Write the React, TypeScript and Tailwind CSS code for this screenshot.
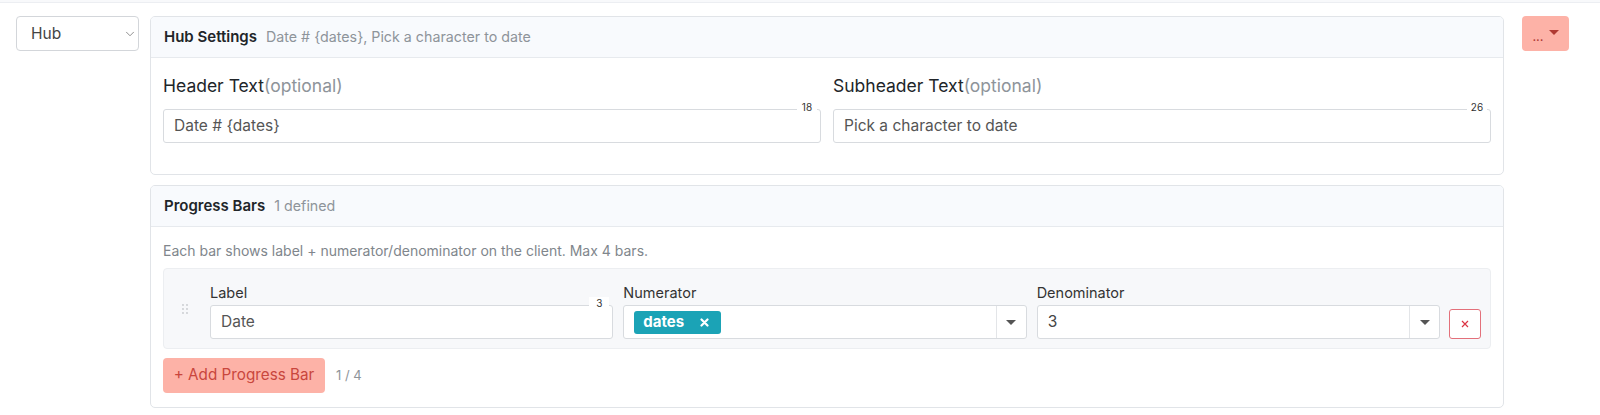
import { ChevronDown } from 'lucide-react';

const font = { fontFamily: 'Inter, "Noto Sans", sans-serif' };

function Caret({ className = '' }: { className?: string }) {
  return (
    <svg className={className} width="10" height="5" viewBox="0 0 10 5">
      <path d="M0 0h10L5 5z" fill="currentColor" />
    </svg>
  );
}

function Counter({ value }: { value: number }) {
  return (
    <span className="absolute right-[4px] -top-[8px] w-[20px] bg-white text-center text-[10px] leading-[12px] text-[#333]">
      {value}
    </span>
  );
}

function CountedInput({ value, count }: { value: string; count: number }) {
  return (
    <div className="relative">
      <div className="h-[34px] rounded-[3px] border border-[#d8dbdf] bg-white px-[10px] flex items-center text-[15.5px] text-[#555]">
        {value}
      </div>
      <Counter value={count} />
    </div>
  );
}

function SelectBox({ children }: { children: React.ReactNode }) {
  return (
    <div className="h-[34px] rounded-[3px] border border-[#d8dbdf] bg-white flex">
      <div className="flex-1 flex items-center px-[10px]">{children}</div>
      <div className="w-[30px] border-l border-[#e3e5e8] flex items-center justify-center text-[#555]">
        <Caret />
      </div>
    </div>
  );
}

function DragHandle() {
  return (
    <svg width="6" height="10" viewBox="0 0 6 10" className="text-[#c6c9cd]">
      {[0, 4, 8].map(y => (
        <g key={y}>
          <circle cx="1" cy={y + 1} r="0.9" fill="currentColor" />
          <circle cx="5" cy={y + 1} r="0.9" fill="currentColor" />
        </g>
      ))}
    </svg>
  );
}

function CardHeader({ title, note }: { title: string; note: string }) {
  return (
    <div className="h-[41px] bg-[#f8fafd] border-b border-[#e7eaee] flex items-center px-[13px] gap-[9px] rounded-t-[4px]">
      <span className="text-[15px] font-semibold text-[#212529]">{title}</span>
      <span className="text-[14.25px] text-[#8e949a]">{note}</span>
    </div>
  );
}

export default function App() {
  return (
    <div className="min-h-[415px] bg-white" style={font}>
      <div className="h-[3px] border-b border-[#eceef2] bg-[#f8f9fb]" />
      <div className="flex items-start pl-[16px] pt-[13px]">
        <div className="w-[123px] h-[35px] rounded-[4px] border border-[#d3d6da] bg-white flex items-center justify-between pl-[14px] pr-[1px] text-[15.5px] text-[#444]">
          <span>Hub</span>
          <ChevronDown size={14} strokeWidth={1.25} className="text-[#666]" />
        </div>

        <div className="ml-[11px] w-[1354px] flex flex-col gap-[10px]">
          {/* Hub Settings */}
          <div className="rounded-[5px] border border-[#e1e4e8] bg-white">
            <CardHeader title="Hub Settings" note="Date # {dates}, Pick a character to date" />
            <div className="px-[12px] pt-[17px] pb-[31px] grid grid-cols-2 gap-[12px]">
              <div>
                <div className="text-[17.5px] leading-[22px] text-[#212529] mb-[12px]">
                  Header Text<span className="text-[#8e949a]">(optional)</span>
                </div>
                <CountedInput value="Date # {dates}" count={18} />
              </div>
              <div>
                <div className="text-[17.5px] leading-[22px] text-[#212529] mb-[12px]">
                  Subheader Text<span className="text-[#8e949a]">(optional)</span>
                </div>
                <CountedInput value="Pick a character to date" count={26} />
              </div>
            </div>
          </div>

          {/* Progress Bars */}
          <div className="rounded-[5px] border border-[#e1e4e8] bg-white">
            <CardHeader title="Progress Bars" note="1 defined" />
            <div className="px-[12px] pt-[15px] pb-[14px]">
              <div className="text-[14px] leading-[18px] text-[#80868c]">
                Each bar shows label + numerator/denominator on the client. Max 4 bars.
              </div>
              <div className="mt-[8px] rounded-[4px] border border-[#eceef1] bg-[#f7f8fa] pl-[18px] pr-[9px] pt-[14px] pb-[9px] flex items-end">
                <div className="w-[28px] self-start pt-[21px]">
                  <DragHandle />
                </div>
                <div className="flex-1 grid grid-cols-3 gap-[10px]">
                  <div>
                    <div className="text-[14.5px] leading-[20px] text-[#333] mb-[2px]">Label</div>
                    <CountedInput value="Date" count={3} />
                  </div>
                  <div>
                    <div className="text-[14.5px] leading-[20px] text-[#333] mb-[2px]">Numerator</div>
                    <SelectBox>
                      <span className="h-[23px] rounded-[3px] bg-[#1ba3b6] text-white text-[15px] font-bold flex items-center pl-[9px] pr-[12px] gap-[16px]">
                        dates
                        <svg width="9" height="9" viewBox="0 0 9 9">
                          <path d="M1.5 1.5l6 6M7.5 1.5l-6 6" stroke="white" strokeWidth="2.2" strokeLinecap="round" />
                        </svg>
                      </span>
                    </SelectBox>
                  </div>
                  <div>
                    <div className="text-[14.5px] leading-[20px] text-[#333] mb-[2px]">Denominator</div>
                    <SelectBox>
                      <span className="text-[15.5px] text-[#444]">3</span>
                    </SelectBox>
                  </div>
                </div>
                <button className="ml-[9px] w-[32px] h-[30px] rounded-[3px] border border-[#e3707a] bg-white flex items-center justify-center">
                  <svg width="8" height="8" viewBox="0 0 8 8">
                    <path d="M1 1l6 6M7 1L1 7" stroke="#dc3545" strokeWidth="1.2" />
                  </svg>
                </button>
              </div>
              <div className="mt-[9px] flex items-center gap-[11px]">
                <button className="h-[35px] w-[162px] rounded-[4px] bg-[#fdb2a7] text-[15.25px] text-[#c9463d]">
                  + Add Progress Bar
                </button>
                <span className="text-[13px] text-[#8e949a]">1 / 4</span>
              </div>
            </div>
          </div>
        </div>

        <button className="ml-[18px] w-[47px] h-[35px] rounded-[4px] bg-[#fdb2a7] flex items-center justify-center gap-[5px] text-[#b03a33]">
          <span className="text-[13px] leading-none pt-[5px]">...</span>
          <Caret className="-mt-[2px]" />
        </button>
      </div>
    </div>
  );
}
